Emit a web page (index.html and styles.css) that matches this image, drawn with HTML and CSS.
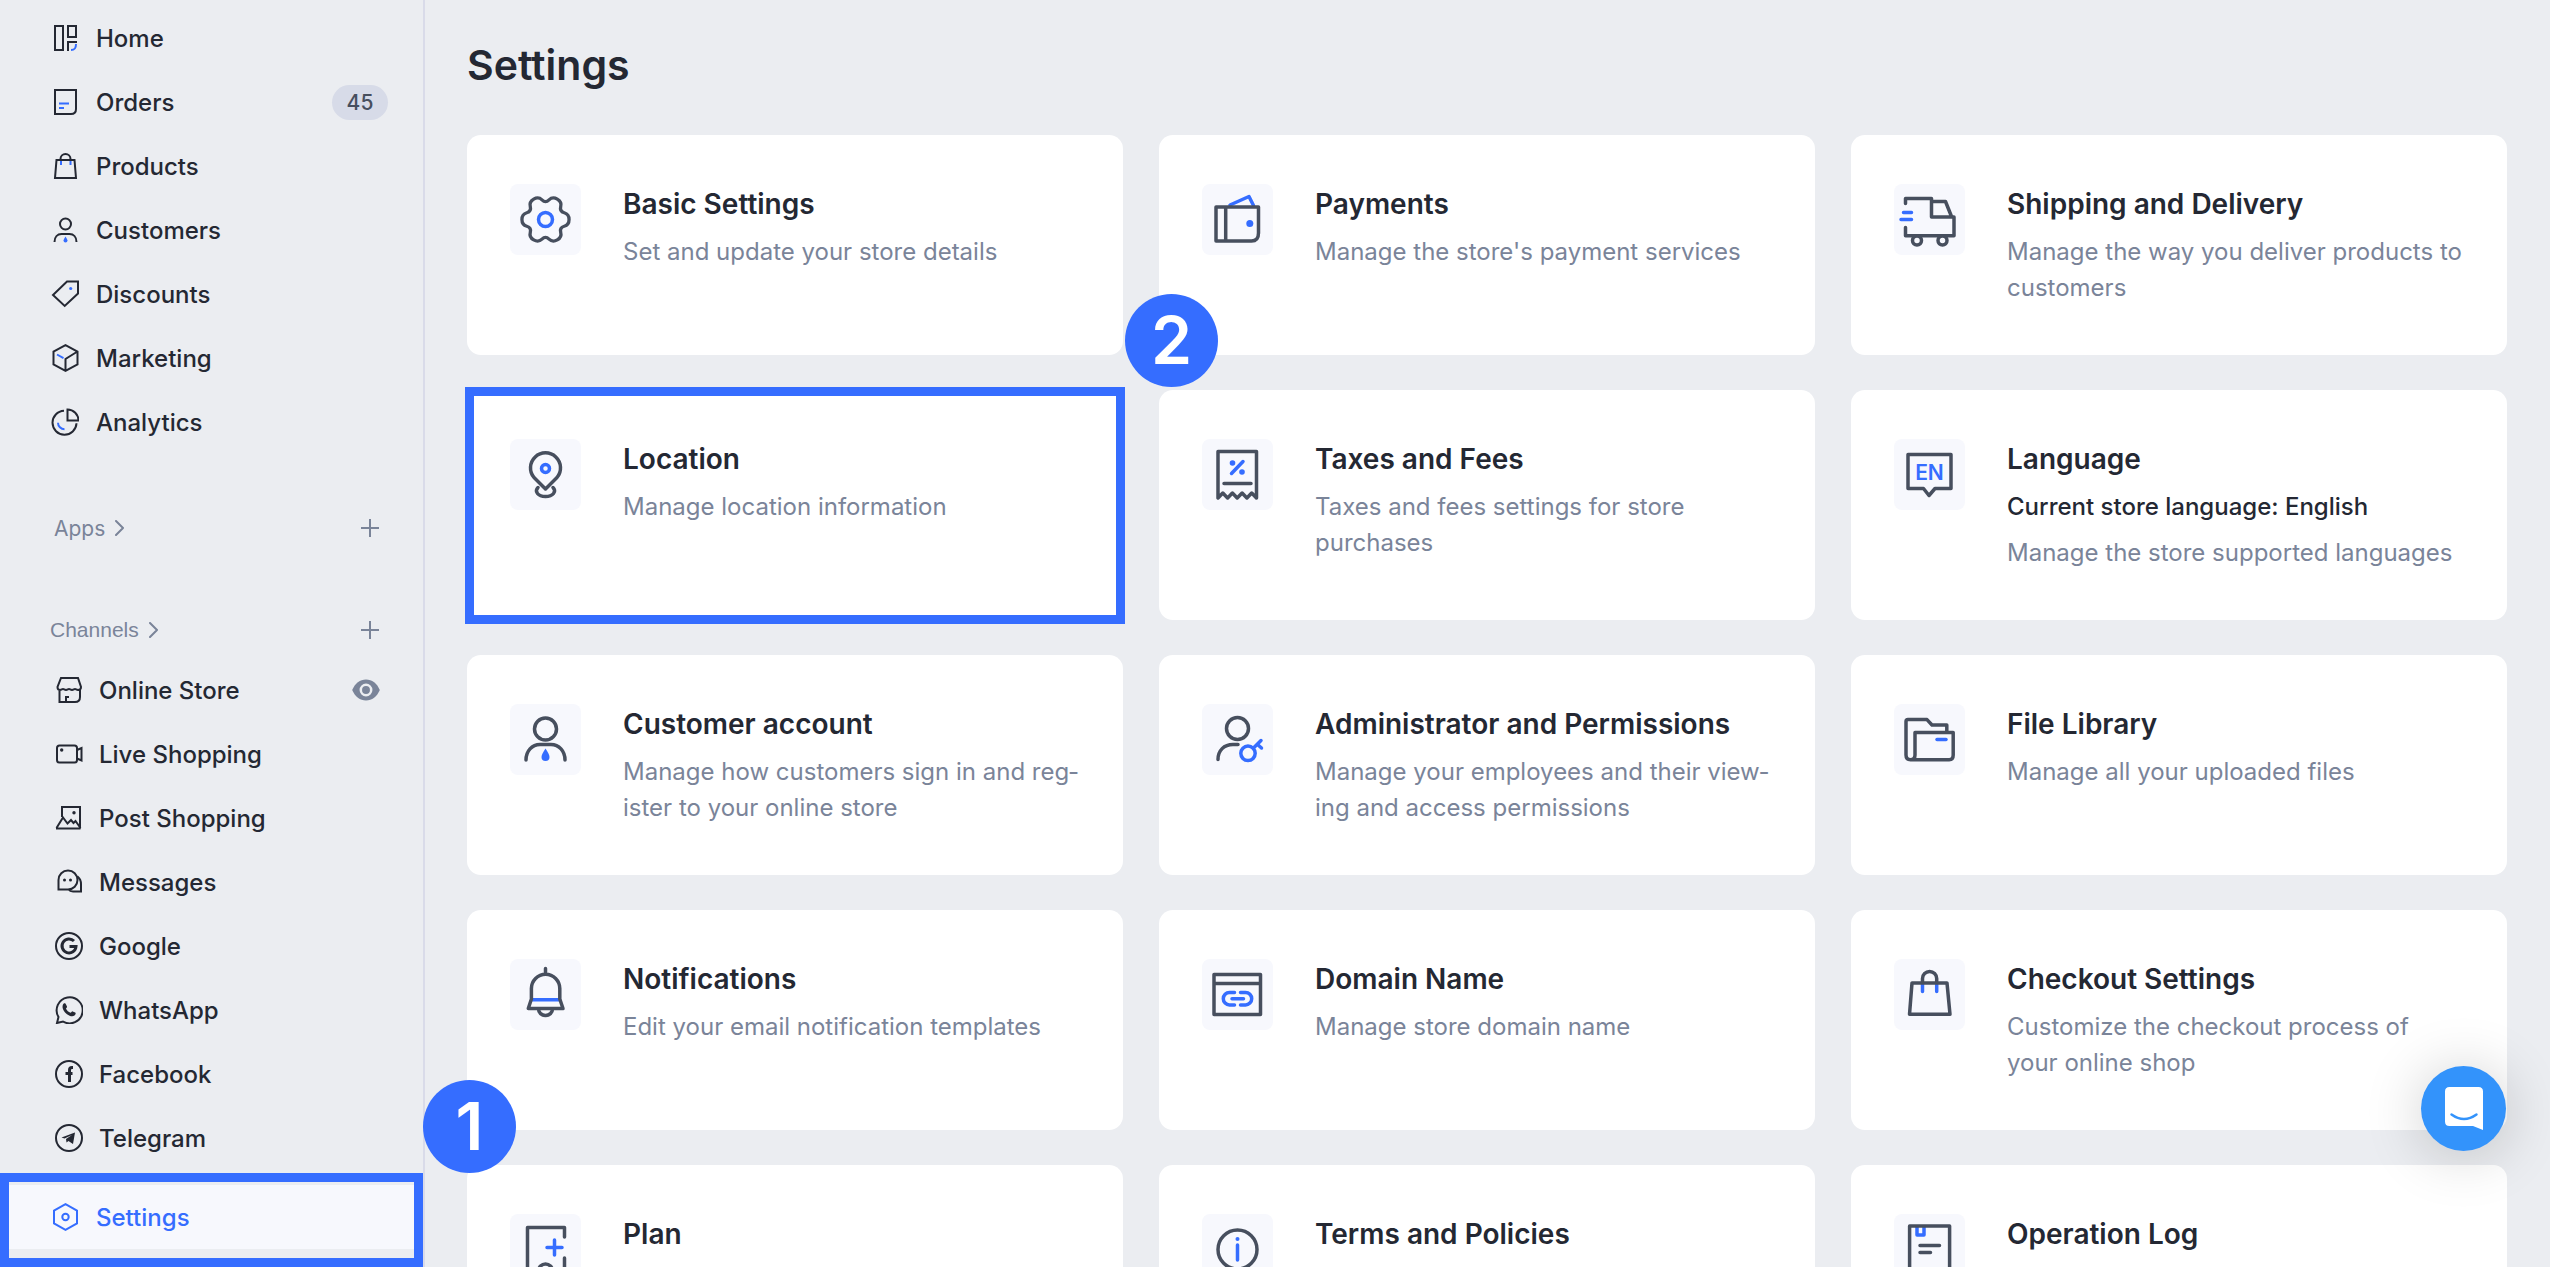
FILE: index.html
```html
<!DOCTYPE html>
<html lang="en">
<head>
    <meta charset="UTF-8">
    <meta name="viewport" content="width=device-width, initial-scale=1.0">
    <title>Settings</title>
    <link rel="stylesheet" href="styles.css">
</head>
<body>
    <div class="app">
        <aside class="sidebar">
            <nav class="nav">
                <a class="nav-item" href="#">
                    <svg class="nav-icon" viewBox="0 0 28 28"><path d="M4 2h8v24H4zM17 2h8v11h-8zM17 27v-9h9"/><path class="blue" d="M25 20c0 4-1 6-5 6"/></svg>
                    <span>Home</span>
                </a>
                <a class="nav-item" href="#">
                    <svg class="nav-icon" viewBox="0 0 28 28"><path d="M4 2h21v19q0 5-5 5H4z"/><path class="blue" d="M8 15.500h10M8 20h5"/></svg>
                    <span>Orders</span>
                    <span class="count">45</span>
                </a>
                <a class="nav-item" href="#">
                    <svg class="nav-icon" viewBox="0 0 28 28"><path d="M5.500 8h18l1.500 18H4zM9.500 8V7a5 5 0 0 1 10 0v1"/><path class="blue" d="M10 9v4M19.500 9v4"/></svg>
                    <span>Products</span>
                </a>
                <a class="nav-item" href="#">
                    <svg class="nav-icon" viewBox="0 0 28 28"><circle cx="14.500" cy="8" r="5.500"/><path d="M3.500 26c0-5 3-8 7-8h8c4 0 7 3 7 8"/><path class="blue-fill" d="M14.500 20.500q2 3 2 4a2 2 0 0 1-4 0q0-1 2-4z"/></svg>
                    <span>Customers</span>
                </a>
                <a class="nav-item" href="#">
                    <svg class="nav-icon" viewBox="0 0 28 28"><path d="M16 1.500h11v12L13.700 26 2 15z"/><circle class="blue-fill" cx="19.700" cy="8.500" r="1.600"/></svg>
                    <span>Discounts</span>
                </a>
                <a class="nav-item" href="#">
                    <svg class="nav-icon" viewBox="0 0 28 28"><path d="M14.500 1.200 26.500 7.500v13l-12 6.300-12-6.300v-13zM26.500 7.500l-12 7.500v11.500"/><path class="blue" d="M6 10.500l6.500 3.700"/></svg>
                    <span>Marketing</span>
                </a>
                <a class="nav-item" href="#">
                    <svg class="nav-icon" viewBox="0 0 28 28"><path d="M13 2.700a12 12 0 1 0 12.500 12.500M16.500 1.500a11 11 0 0 1 11 11h-11z"/><path class="blue" d="M7 14.700a6.500 6.500 0 0 0 6.500 6.500"/></svg>
                    <span>Analytics</span>
                </a>
            </nav>

            <div class="group group-apps">
                <a class="group-link" href="#">Apps
                    <svg class="chevron" viewBox="0 0 10 16"><path d="M1 1l7 7-7 7"/></svg>
                </a>
                <button class="add" aria-label="Add app"><svg viewBox="0 0 18 18"><path d="M9 0v18M0 9h18"/></svg></button>
            </div>
            <div class="group group-channels">
                <a class="group-link" href="#">Channels
                    <svg class="chevron" viewBox="0 0 10 16"><path d="M1 1l7 7-7 7"/></svg>
                </a>
                <button class="add" aria-label="Add channel"><svg viewBox="0 0 18 18"><path d="M9 0v18M0 9h18"/></svg></button>
            </div>

            <nav class="nav nav-channels">
                <a class="nav-item" href="#">
                    <svg class="nav-icon" viewBox="0 0 28 28"><path d="M6 2h17l3 9c0 2-1.500 3-3 3s-2-1-3-1-1.500 1-3 1-2-1-3-1-1.500 1-3 1-2-1-3-1-1.500 1-3 1-2.500-1-2.500-3zM4.500 13v13H20q5 0 5-5v-8M11 26v-5h3"/></svg>
                    <span>Online Store</span>
                    <svg class="eye" viewBox="0 0 28 22"><path d="M14 0.500c6 0 11 4 13.800 10.500C25 17.500 20 21.500 14 21.500S3 17.500 0.200 11C3 4.500 8 0.500 14 0.500z"/><circle cx="14" cy="11" r="5.200"/></svg>
                </a>
                <a class="nav-item" href="#">
                    <svg class="nav-icon" viewBox="0 0 28 28"><rect x="2" y="5.500" width="20" height="17" rx="2.500"/><path d="M22 10l4.500-2v12.500L22 18.500"/><circle class="dark-fill" cx="6.700" cy="10" r="1.700"/></svg>
                    <span>Live Shopping</span>
                </a>
                <a class="nav-item" href="#">
                    <svg class="nav-icon" viewBox="0 0 28 28"><path d="M7 13V3h18v21.500M1 24.500h24.500M1.500 24L8 13.500l4.500 6L16 16l2.500 3 2-2 5 7"/><circle class="dark-fill" cx="19" cy="8.700" r="1.700"/></svg>
                    <span>Post Shopping</span>
                </a>
                <a class="nav-item" href="#">
                    <svg class="nav-icon" viewBox="0 0 28 28"><path d="M3.500 21.500v-9.500a9.500 9.500 0 1 1 9.500 9.500zM22.500 8.500c2.500 2 3.500 4.500 3.500 7.500v7.500h-8q-3 0-4.500-2"/><circle class="dark-fill" cx="9.500" cy="12" r="1.500"/><circle class="dark-fill" cx="15.500" cy="12" r="1.500"/></svg>
                    <span>Messages</span>
                </a>
                <a class="nav-item" href="#">
                    <svg class="nav-icon" viewBox="0 0 28 28"><circle cx="14" cy="14" r="13"/><path class="thick" d="M19 9a7 7 0 1 0 2 5.500h-6.500"/></svg>
                    <span>Google</span>
                </a>
                <a class="nav-item" href="#">
                    <svg class="nav-icon" viewBox="0 0 28 28"><path d="M2 27l1.500-6A13 13 0 1 1 8 25.500z"/><path class="dark-fill" d="M8 8.500c1-2 2.500-1.500 3 0l1 2c.3 1-1 1.500-1 2.300 1 2 2.400 3.200 4.500 4 .8 0 1.300-1.700 2.200-1.400l2.500 1.200c1 .6.300 2.200-.7 3-2 1.500-5 .5-7.500-1.400C9 16 6.500 12 8 8.500z"/></svg>
                    <span>WhatsApp</span>
                </a>
                <a class="nav-item" href="#">
                    <svg class="nav-icon" viewBox="0 0 28 28"><circle cx="14" cy="14" r="13"/><path class="thick" d="M18 7.500h-1q-2.500 0-2.500 2.500v12M10.500 13.500h7"/></svg>
                    <span>Facebook</span>
                </a>
                <a class="nav-item" href="#">
                    <svg class="nav-icon" viewBox="0 0 28 28"><circle cx="14" cy="14" r="13"/><path class="dark-fill" d="M6.500 13.500L20 8.500l-2 11.500-4.500-3-2 1.500-.5-3.500 6-4-7.500 3.500z"/></svg>
                    <span>Telegram</span>
                </a>
            </nav>

            <div class="highlight sidebar-footer">
                <a class="nav-item active" href="#">
                    <svg class="nav-icon" viewBox="0 0 28 28"><path d="M14.500 1.200L26 7.500v13l-11.500 6.300L3 20.500v-13z"/><circle cx="14.500" cy="14" r="3.200"/></svg>
                    <span>Settings</span>
                </a>
                <span class="step">1</span>
            </div>
        </aside>

        <main class="content">
            <h1>Settings</h1>
            <div class="cards">
                <a class="card" href="#">
                    <svg class="card-icon" viewBox="0 0 71 71"><path transform="translate(35.500 35.500) scale(.95)" d="M24.800 0Q24.800 5.700 19.700 7.100Q14.700 8.500 16 13.500Q17.400 18.600 12.400 21.500Q7.500 24.400 3.700 20.700Q0 17 -3.700 20.700Q-7.500 24.400 -12.400 21.500Q-17.400 18.600 -16 13.500Q-14.700 8.500 -19.700 7.100Q-24.800 5.700 -24.800 0Q-24.800 -5.700 -19.700 -7.100Q-14.700 -8.500 -16 -13.500Q-17.400 -18.600 -12.400 -21.500Q-7.500 -24.400 -3.700 -20.700Q0 -17 3.700 -20.700Q7.500 -24.400 12.400 -21.500Q17.400 -18.600 16 -13.500Q14.700 -8.500 19.700 -7.100Q24.800 -5.700 24.800 0z"/><circle class="blue" cx="35.500" cy="35.500" r="7"/></svg>
                    <div class="card-text">
                        <h2>Basic Settings</h2>
                        <p>Set and update your store details</p>
                    </div>
                </a>
                <a class="card" href="#">
                    <svg class="card-icon" viewBox="0 0 71 71"><path class="blue" d="M28 21l19-8.500 4.500 9"/><path d="M14 23h42.500v26q0 8-7 8H14zM23.700 23v34"/><circle class="blue-fill" cx="47.800" cy="39.500" r="3.500"/></svg>
                    <div class="card-text">
                        <h2>Payments</h2>
                        <p>Manage the store's payment services</p>
                    </div>
                </a>
                <a class="card" href="#">
                    <svg class="card-icon" viewBox="0 0 71 71"><path d="M11.500 19.500v-5h26V33H60v18.700H11.500V43.500M37.500 17.500h14l6 15"/><circle class="wheel" cx="23" cy="56.500" r="4.500"/><circle class="wheel" cx="48.500" cy="56.500" r="4.500"/><path class="blue" d="M9.500 28.500h8M7 35.500h10.500"/></svg>
                    <div class="card-text">
                        <h2>Shipping and Delivery</h2>
                        <p>Manage the way you deliver products to customers</p>
                    </div>
                </a>
                <div class="highlight-wrap">
                    <a class="card" href="#">
                        <svg class="card-icon" viewBox="0 0 71 71"><path d="M35.500 50L24 38.500a15 15 0 1 1 23 0zM28 48.500c-4 4 0 9 7.500 9s11.500-5 7.500-9"/><circle class="blue" cx="35.500" cy="29.500" r="4"/></svg>
                        <div class="card-text">
                            <h2>Location</h2>
                            <p>Manage location information</p>
                        </div>
                    </a>
                    <div class="highlight card-highlight"><span class="step">2</span></div>
                </div>
                <a class="card" href="#">
                    <svg class="card-icon" viewBox="0 0 71 71"><path d="M16 59V12.500h38.500V59l-4.800-5-4.800 5-4.800-5-4.900 5-4.800-5-4.800 5-4.800-5zM22 44.500h27"/><path class="blue" d="M41 22.500L29.500 34.500"/><circle class="blue-fill" cx="30.500" cy="24" r="2.800"/><circle class="blue-fill" cx="40" cy="33" r="2.800"/></svg>
                    <div class="card-text">
                        <h2>Taxes and Fees</h2>
                        <p>Taxes and fees settings for store purchases</p>
                    </div>
                </a>
                <a class="card" href="#">
                    <svg class="card-icon" viewBox="0 0 71 71"><path d="M14 15.500h43v34H41l-6 7-5.500-7H14z"/><text x="35.500" y="41" text-anchor="middle">EN</text></svg>
                    <div class="card-text">
                        <h2>Language</h2>
                        <p class="current">Current store language: English</p>
                        <p>Manage the store supported languages</p>
                    </div>
                </a>
                <a class="card" href="#">
                    <svg class="card-icon" viewBox="0 0 71 71"><circle cx="35.500" cy="25" r="11"/><path d="M16 56c0-9 6-15.500 14-15.500h11c8 0 14 6.500 14 15.500"/><path class="blue-fill" d="M35.500 44.500q4 6 4 8.500a4 4 0 0 1-8 0q0-2.500 4-8.500z"/></svg>
                    <div class="card-text">
                        <h2>Customer account</h2>
                        <p>Manage how customers sign in and reg&shy;ister to your online store</p>
                    </div>
                </a>
                <a class="card" href="#">
                    <svg class="card-icon" viewBox="0 0 71 71"><circle cx="35.500" cy="24.500" r="11"/><path d="M16 55.500c0-9 6-15 15-15h5"/><circle class="blue" cx="46" cy="49.300" r="7.200"/><path class="blue" d="M51.500 44l7.500-7.500M55.500 40.500l4 3.500"/></svg>
                    <div class="card-text">
                        <h2>Administrator and Permissions</h2>
                        <p>Manage your employees and their view&shy;ing and access permissions</p>
                    </div>
                </a>
                <a class="card" href="#">
                    <svg class="card-icon" viewBox="0 0 71 71"><path d="M52.800 28V21H38l-5-5.400H14q-2 0-2 2V51q0 4.700 4.500 4.700T21 51V28.400h38.200V51q0 4.700-4 4.700H16.500"/><path class="blue" d="M43 35.600h9"/></svg>
                    <div class="card-text">
                        <h2>File Library</h2>
                        <p>Manage all your uploaded files</p>
                    </div>
                </a>
                <a class="card" href="#">
                    <svg class="card-icon" viewBox="0 0 71 71"><path class="blue" d="M22 40.700h27.500"/><path d="M35.500 9.500V15M21.400 40V29.500a14.200 14.200 0 0 1 28.400 0V40l3.200 9.500H18.300zM28.500 50a7 6.500 0 0 0 14 0"/></svg>
                    <div class="card-text">
                        <h2>Notifications</h2>
                        <p>Edit your email notification templates</p>
                    </div>
                </a>
                <a class="card" href="#">
                    <svg class="card-icon" viewBox="0 0 71 71"><path d="M12 15.500h46.500v40H12zM12 24.500h46.500"/><path class="blue" d="M32.500 33.500h-5a6.200 6.200 0 0 0 0 12.400h5M38.500 33.500h5a6.200 6.200 0 0 1 0 12.400h-5M30 39.700h11.500"/></svg>
                    <div class="card-text">
                        <h2>Domain Name</h2>
                        <p>Manage store domain name</p>
                    </div>
                </a>
                <a class="card" href="#">
                    <svg class="card-icon" viewBox="0 0 71 71"><path class="blue" d="M28.500 25v7.500M42.700 25v7.500"/><path d="M18 24h35l3 31.300H15.500zM28.500 24v-4.500a7.100 7.100 0 0 1 14.200 0V24"/></svg>
                    <div class="card-text">
                        <h2>Checkout Settings</h2>
                        <p>Customize the checkout process of your online shop</p>
                    </div>
                </a>
                <a class="card" href="#">
                    <svg class="card-icon" viewBox="0 0 71 71"><path d="M54.500 23V13.500h-37V62h37V44"/><circle cx="35.500" cy="57" r="7"/><path class="blue" d="M44.500 26v15M37 33.500h15"/></svg>
                    <div class="card-text">
                        <h2>Plan</h2>
                    </div>
                </a>
                <a class="card" href="#">
                    <svg class="card-icon" viewBox="0 0 71 71"><circle cx="35.500" cy="35.500" r="19.500"/><path class="blue" d="M35.500 31v15"/><circle class="blue-fill" cx="35.500" cy="25" r="2"/></svg>
                    <div class="card-text">
                        <h2>Terms and Policies</h2>
                    </div>
                </a>
                <a class="card" href="#">
                    <svg class="card-icon" viewBox="0 0 71 71"><path class="blue" d="M23 13v8h7v-8"/><path d="M15.600 12h40v47h-40zM26 31.500h19.500M26 38.500h10.500"/></svg>
                    <div class="card-text">
                        <h2>Operation Log</h2>
                    </div>
                </a>
            </div>
        </main>

        <button class="chat" aria-label="Open chat">
            <svg viewBox="0 0 38 43"><path class="bubble" d="M4.500 0h29Q38 0 38 4.500V43l-10-4H4.500Q0 39 0 34.500v-30Q0 0 4.500 0z"/><path class="smile" d="M6.500 27.500q12.500 9 25 0"/></svg>
        </button>
    </div>
</body>
</html>
```

FILE: styles.css
```css
* {
    box-sizing: border-box;
}
body {
    margin: 0;
    font-family: Inter, "Liberation Sans", sans-serif;
    font-size: 24px;
    color: #242833;
    background-color: #ebedf1;
}
a {
    color: inherit;
    text-decoration: none;
}
button {
    padding: 0;
    border: none;
    background: none;
    cursor: pointer;
}
svg {
    display: block;
    flex: none;
    fill: none;
    stroke-linecap: round;
    stroke-linejoin: round;
}
.app {
    display: flex;
    height: 100vh;
    overflow: hidden;
}

/* Sidebar */
.sidebar {
    display: flex;
    flex-direction: column;
    flex: none;
    width: 425px;
    padding-top: 6px;
    border-right: 2px solid #d9dbe9;
}
.nav-item {
    display: flex;
    align-items: center;
    gap: 17px;
    height: 64px;
    padding: 0 35px 0 51px;
    font-weight: 500;
}
.nav-channels .nav-item {
    gap: 16px;
    padding-left: 55px;
}
.nav-icon {
    width: 28px;
    height: 28px;
    stroke: #242833;
    stroke-width: 2;
    stroke-linecap: butt;
    stroke-linejoin: miter;
}
.nav-icon .thick {
    stroke-width: 3;
}
.nav-icon .dark-fill {
    fill: #242833;
    stroke: none;
}
.blue {
    stroke: #356dff;
}
.blue-fill {
    fill: #356dff;
    stroke: none;
}
.count {
    margin-left: auto;
    width: 56px;
    border-radius: 18px;
    background-color: #d7dbe8;
    color: #474f5e;
    font-size: 21px;
    line-height: 35px;
    text-align: center;
}
.eye {
    width: 28px;
    height: 22px;
    margin-left: auto;
    margin-right: 8px;
    fill: #7a8499;
}
.eye circle {
    stroke: #ebedf1;
    stroke-width: 2.5;
}
.group {
    display: flex;
    align-items: center;
    justify-content: space-between;
    height: 56px;
    margin-top: 46px;
    padding: 0 44px 0 54px;
    color: #7a8499;
    font-size: 21px;
}
.group-channels {
    padding-left: 50px;
    font-family: "Liberation Sans", Arial, sans-serif;
}
.group-link {
    display: flex;
    align-items: center;
    gap: 10px;
}
.chevron {
    width: 10px;
    height: 16px;
    stroke: #7a8499;
    stroke-width: 2;
}
.add svg {
    width: 18px;
    height: 18px;
    stroke: #7a8499;
    stroke-width: 2;
}

/* Highlighted areas with step numbers */
.highlight {
    position: relative;
    border: 9px solid #356dff;
}
.step {
    position: absolute;
    left: calc(100% + 9px);
    bottom: calc(100% + 9px);
    z-index: 2;
    width: 93px;
    height: 93px;
    border-radius: 50%;
    background-color: #356dff;
    color: #fff;
    font-size: 66px;
    font-weight: 600;
    line-height: 93px;
    text-align: center;
}
.sidebar-footer {
    margin-top: auto;
    padding: 3px 0 9px;
}
.active {
    padding-left: 42px;
    background-color: #f7f8fd;
    color: #356dff;
}
.active .nav-icon {
    stroke: #356dff;
}

/* Content */
.content {
    flex: 1;
    padding: 40px 43px 0 42px;
}
h1 {
    margin: 0 0 45px;
    font-size: 41px;
    font-weight: 600;
    line-height: 50px;
}
.cards {
    display: grid;
    grid-template-columns: repeat(3, 1fr);
    gap: 35px 36px;
}
.card {
    display: flex;
    align-items: flex-start;
    gap: 42px;
    min-height: 220px;
    padding: 49px 42px 49px 43px;
    border-radius: 14px;
    background-color: #fff;
}
.card-icon {
    width: 71px;
    height: 71px;
    border-radius: 8px;
    background-color: #f7f8fd;
    stroke: #474f5e;
    stroke-width: 3.5;
}
.card-icon .wheel {
    fill: #f7f8fd;
}
.card-icon text {
    fill: #356dff;
    stroke: none;
    font-size: 21px;
    font-weight: 600;
}
.card-text {
    display: flex;
    flex-direction: column;
    gap: 10px;
}
h2 {
    margin: 0;
    font-size: 28px;
    font-weight: 600;
    line-height: 40px;
}
p {
    margin: 0;
    color: #7a8499;
    line-height: 36px;
}
.current {
    color: #242833;
    font-weight: 500;
}
.highlight-wrap {
    position: relative;
    display: grid;
}
.card-highlight {
    position: absolute;
    inset: -3px -2px -4px;
}

/* Chat launcher */
.chat {
    position: fixed;
    right: 44px;
    bottom: 116px;
    display: grid;
    place-items: center;
    width: 85px;
    height: 85px;
    border-radius: 50%;
    background-color: #3393fb;
    box-shadow: 0 4px 60px rgba(0, 0, 0, 0.2);
}
.chat svg {
    width: 38px;
    height: 43px;
}
.bubble {
    fill: #fff;
}
.smile {
    stroke: #3393fb;
    stroke-width: 2.5;
}
```
